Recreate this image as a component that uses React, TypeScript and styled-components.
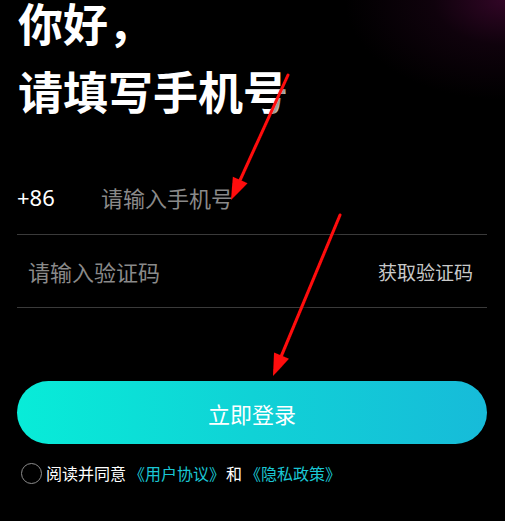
import React from "react";
import styled, { createGlobalStyle } from "styled-components";

const Global = createGlobalStyle`
  html, body { margin: 0; padding: 0; background: #000; }
  body { font-family: "Noto Sans CJK SC", "Noto Sans", sans-serif; }
  * { box-sizing: border-box; }
`;

const Page = styled.div`
  position: relative;
  width: 505px;
  height: 521px;
  overflow: hidden;
  background:
    radial-gradient(ellipse 160px 100px at 100% 0%, rgba(52, 6, 40, 0.95) 0%, rgba(30, 4, 24, 0.5) 45%, rgba(0, 0, 0, 0) 100%),
    #000;
  padding: 0 18px 0 17px;
  display: flex;
  flex-direction: column;
`;

const Title = styled.h1`
  margin: 0 0 0 1px;
  font-size: 45px;
  font-weight: 700;
  color: #fff;
  display: flex;
  flex-direction: column;
  gap: 23px;
`;

const TitleLine = styled.span`
  display: block;
  line-height: 45px;
  white-space: nowrap;
`;

const Form = styled.div`
  margin-top: 49px;
  display: flex;
  flex-direction: column;
`;

const Row = styled.div<{ $lift?: number }>`
  height: 73px;
  display: flex;
  align-items: center;
  border-bottom: 1px solid #3a3a3a;
  padding-bottom: ${(p) => p.$lift ?? 0}px;
`;

const Prefix = styled.span`
  font-family: "Noto Sans", sans-serif;
  font-size: 22px;
  color: #fff;
  width: 84px;
`;

const Placeholder = styled.span<{ $indent?: number }>`
  font-size: 22px;
  color: #8a8a8a;
  margin-left: ${(p) => p.$indent ?? 0}px;
  flex: 1;
`;

const CodeBtn = styled.span`
  font-size: 19px;
  color: #c9c9c9;
  margin-right: 14px;
`;

const Submit = styled.button`
  margin-top: 73px;
  height: 63px;
  width: 100%;
  border: none;
  border-radius: 32px;
  background: linear-gradient(90deg, #08ecd8 0%, #10d2d6 50%, #17bbd9 100%);
  color: #fff;
  font-family: "Noto Sans CJK SC", sans-serif;
  font-size: 22px;
  display: flex;
  align-items: center;
  justify-content: center;
  padding: 0;
`;

const Agree = styled.div`
  margin-top: 17px;
  margin-left: 4px;
  display: flex;
  align-items: center;
  font-size: 16px;
  color: #fff;
`;

const Circle = styled.span`
  width: 21px;
  height: 21px;
  border-radius: 50%;
  border: 1.5px solid #8c8c8c;
  margin-right: 4px;
  flex: none;
`;

const Link = styled.span`
  color: #1ac6d4;
  margin: 0 1px 0 3px;
`;

const Overlay = styled.svg`
  position: absolute;
  left: 0;
  top: 0;
  pointer-events: none;
  overflow: visible;
`;

function Arrow({ x1, y1, x2, y2 }: { x1: number; y1: number; x2: number; y2: number }) {
  const dx = x2 - x1;
  const dy = y2 - y1;
  const len = Math.hypot(dx, dy);
  const ux = dx / len;
  const uy = dy / len;
  const headLen = 22;
  const headW = 8;
  const bx = x2 - ux * headLen;
  const by = y2 - uy * headLen;
  const px = -uy;
  const py = ux;
  const pts = `${x2},${y2} ${bx + px * headW},${by + py * headW} ${bx - px * headW},${by - py * headW}`;
  return (
    <g filter="url(#shadow)">
      <line x1={x1} y1={y1} x2={bx + ux * 4} y2={by + uy * 4} stroke="#ff0a0a" strokeWidth={3} strokeLinecap="round" />
      <polygon points={pts} fill="#ff0a0a" />
    </g>
  );
}

export default function App() {
  return (
    <>
      <Global />
      <Page>
        <Title>
          <TitleLine>你好，</TitleLine>
          <TitleLine>请填写手机号</TitleLine>
        </Title>
        <Form>
          <Row $lift={3}>
            <Prefix>+86</Prefix>
            <Placeholder>请输入手机号</Placeholder>
          </Row>
          <Row>
            <Placeholder $indent={11}>请输入验证码</Placeholder>
            <CodeBtn>获取验证码</CodeBtn>
          </Row>
        </Form>
        <Submit>立即登录</Submit>
        <Agree>
          <Circle />
          阅读并同意<Link>《用户协议》</Link>和<Link>《隐私政策》</Link>
        </Agree>
        <Overlay width={505} height={521} viewBox="0 0 505 521">
          <defs>
            <filter id="shadow" x="-50%" y="-50%" width="200%" height="200%">
              <feDropShadow dx="2" dy="2" stdDeviation="2" floodColor="#000" floodOpacity="0.8" />
            </filter>
          </defs>
          <Arrow x1={288} y1={75} x2={231} y2={200} />
          <Arrow x1={340} y1={215} x2={273} y2={376} />
        </Overlay>
      </Page>
    </>
  );
}
